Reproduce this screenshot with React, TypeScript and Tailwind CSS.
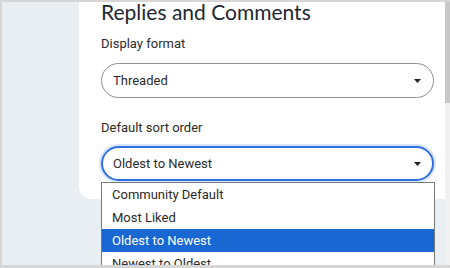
const options = ['Community Default', 'Most Liked', 'Oldest to Newest', 'Newest to Oldest']

function Caret() {
  return (
    <svg width="7" height="4" viewBox="0 0 7 4" className="shrink-0">
      <path d="M0 0h7L3.5 4z" fill="#222" />
    </svg>
  )
}

export default function App() {
  return (
    <div className="w-[450px] h-[268px] flex overflow-hidden border-t-2 border-l-2 border-b-[3px] border-[#d6d6d6] bg-[#e9eef2] font-['Roboto',sans-serif] text-[#2b2b2b]">
      {/* left gutter */}
      <div className="w-[77px] shrink-0" />

      {/* settings card */}
      <div className="flex-1 flex flex-col relative">
        <div className="h-[197px] bg-white rounded-bl-xl pl-[22px] pr-[11px]">
          <h2 className="font-['Lato',sans-serif] text-[21px] leading-[22px] text-[#1d2733] -mt-[1px]">
            Replies and Comments
          </h2>

          <label className="block mt-[13px] text-[13px] leading-[16px]">Display format</label>
          <div className="mt-[11px] h-[35px] rounded-full border border-[#8f8f8f] flex items-center justify-between pl-[11px] pr-[12px] text-[13px]">
            <span>Threaded</span>
            <Caret />
          </div>

          <label className="block mt-[22px] text-[13px] leading-[16px]">Default sort order</label>
          <div className="mt-[10px] h-[35px] rounded-full border-2 border-[#2f6fe4] shadow-[0_0_0_2px_#d7e4fb] flex items-center justify-between pl-[10px] pr-[11px] text-[13px]">
            <span>Oldest to Newest</span>
            <Caret />
          </div>
        </div>

        {/* open select list */}
        <div className="absolute left-[22px] top-[180px] w-[334px] bg-white border border-[#7a7a7a] text-[13px] leading-[23px]">
          {options.map((o, i) => (
            <div
              key={o}
              className={i === 2 ? 'bg-[#1967d2] text-white pl-[10px]' : 'pl-[10px]'}
            >
              {o}
            </div>
          ))}
        </div>
      </div>

      {/* scrollbar */}
      <div className="w-[5px] shrink-0 flex flex-col">
        <div className="h-[101px] bg-[#c8c8c8]" />
        <div className="flex-1 bg-[#f1f1f1]" />
      </div>
    </div>
  )
}
